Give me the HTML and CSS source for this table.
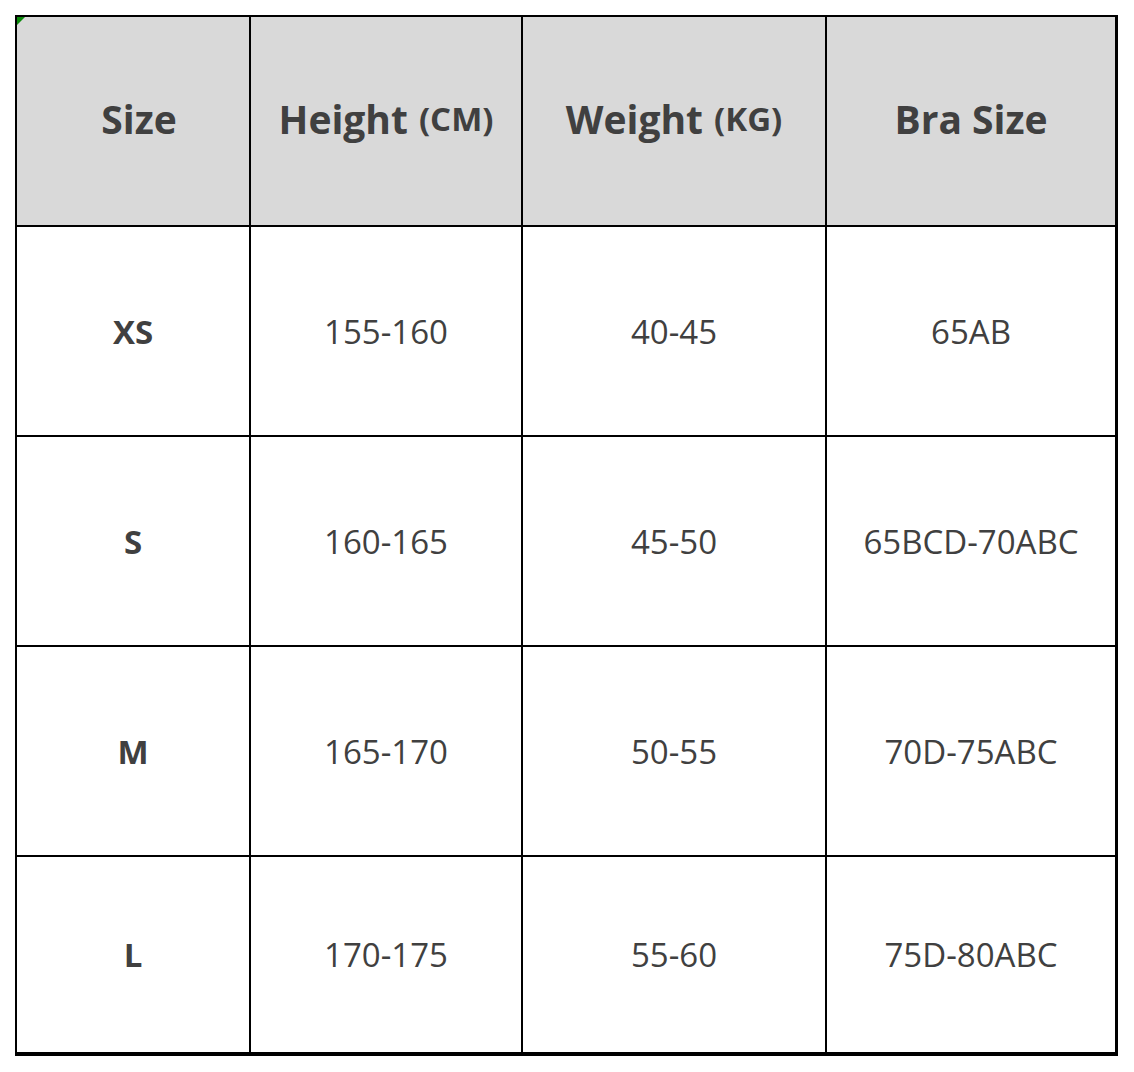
FILE: index.html
```html
<!DOCTYPE html>
<html lang="en">
<head>
<meta charset="utf-8">
<title>Size Chart</title>
<link rel="stylesheet" href="styles.css">
</head>
<body>
<div class="chart">
  <div class="cell head first"><span class="corner"></span>Size</div>
  <div class="cell head">Height <small>(CM)</small></div>
  <div class="cell head">Weight <small>(KG)</small></div>
  <div class="cell head">Bra Size</div>

  <div class="cell label">XS</div>
  <div class="cell">155-160</div>
  <div class="cell">40-45</div>
  <div class="cell">65AB</div>

  <div class="cell label">S</div>
  <div class="cell">160-165</div>
  <div class="cell">45-50</div>
  <div class="cell">65BCD-70ABC</div>

  <div class="cell label">M</div>
  <div class="cell">165-170</div>
  <div class="cell">50-55</div>
  <div class="cell">70D-75ABC</div>

  <div class="cell label">L</div>
  <div class="cell">170-175</div>
  <div class="cell">55-60</div>
  <div class="cell">75D-80ABC</div>
</div>
</body>
</html>
```
FILE: styles.css
```css
html, body {
  margin: 0;
  background: #ffffff;
}
body {
  padding: 15px 0 0 15px;
  font-family: "Open Sans", "Noto Sans", "DejaVu Sans", sans-serif;
  color: #404040;
}
.chart {
  display: grid;
  grid-template-columns: 232px 270px 302px 288px;
  grid-template-rows: 208px 208px 208px 208px 195px;
  gap: 2px;
  padding: 2px 3px 4px 2px;
  background: #000000;
  width: max-content;
}
.cell {
  background: #ffffff;
  display: flex;
  align-items: center;
  justify-content: center;
  font-size: 33px;
  position: relative;
}
.head {
  background: #d9d9d9;
  font-weight: 700;
  font-size: 39px;
  padding-bottom: 6px;
  box-sizing: border-box;
}
.head small {
  font-size: 33px;
  margin-left: 11px;
}
.head.first {
  padding-left: 12px;
}
.label {
  font-weight: 700;
}
.corner {
  position: absolute;
  left: 0;
  top: 0;
  width: 0;
  height: 0;
  border-top: 8px solid #0a8a0a;
  border-right: 8px solid transparent;
}
```
